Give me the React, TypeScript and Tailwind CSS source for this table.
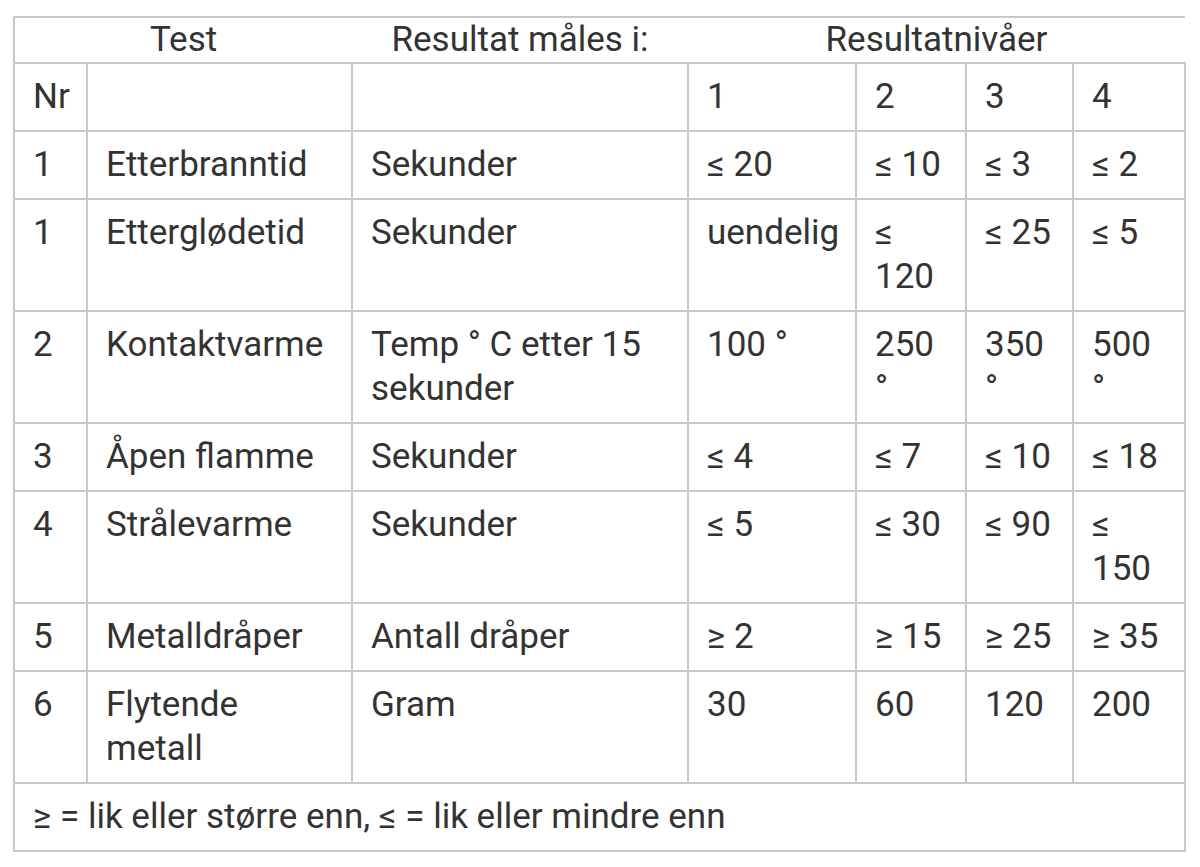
const rows: string[][] = [
  ['1', 'Etterbranntid', 'Sekunder', '≤ 20', '≤ 10', '≤ 3', '≤ 2'],
  ['1', 'Etterglødetid', 'Sekunder', 'uendelig', '≤ 120', '≤ 25', '≤ 5'],
  ['2', 'Kontaktvarme', 'Temp ° C etter 15 sekunder', '100 °', '250 °', '350 °', '500 °'],
  ['3', 'Åpen flamme', 'Sekunder', '≤ 4', '≤ 7', '≤ 10', '≤ 18'],
  ['4', 'Strålevarme', 'Sekunder', '≤ 5', '≤ 30', '≤ 90', '≤ 150'],
  ['5', 'Metalldråper', 'Antall dråper', '≥ 2', '≥ 15', '≥ 25', '≥ 35'],
  ['6', 'Flytende metall', 'Gram', '30', '60', '120', '200'],
];

const cell = 'border-2 border-[#c8c8c8] pl-[18px] pr-3 py-[11px] align-top text-left font-normal';

export default function App() {
  return (
    <div className="min-h-screen bg-white pl-[13px] pt-4 font-['Roboto',sans-serif] text-[35px] leading-[44px] text-[#333]">
      <table className="w-[1171px] table-fixed border-collapse">
        <colgroup>
          <col className="w-[73px]" />
          <col className="w-[265px]" />
          <col className="w-[336px]" />
          <col className="w-[168px]" />
          <col className="w-[110px]" />
          <col className="w-[107px]" />
          <col className="w-[112px]" />
        </colgroup>
        <thead>
          <tr>
            <th colSpan={2} className="border-t-2 border-l-2 border-b-2 border-[#c8c8c8] p-0 text-center font-normal">
              Test
            </th>
            <th className="border-t-2 border-b-2 border-[#c8c8c8] p-0 text-center font-normal">
              Resultat måles i:
            </th>
            <th colSpan={4} className="border-t-2 border-b-2 border-[#c8c8c8] p-0 text-center font-normal">
              Resultatnivåer
            </th>
          </tr>
        </thead>
        <tbody>
          <tr>
            <td className={cell}>Nr</td>
            <td className={cell}></td>
            <td className={cell}></td>
            <td className={cell}>1</td>
            <td className={cell}>2</td>
            <td className={cell}>3</td>
            <td className={cell}>4</td>
          </tr>
          {rows.map((r, i) => (
            <tr key={i}>
              {r.map((v, j) => (
                <td key={j} className={cell}>
                  {v}
                </td>
              ))}
            </tr>
          ))}
          <tr>
            <td colSpan={7} className={cell}>
              ≥ = lik eller større enn, ≤ = lik eller mindre enn
            </td>
          </tr>
        </tbody>
      </table>
    </div>
  );
}
